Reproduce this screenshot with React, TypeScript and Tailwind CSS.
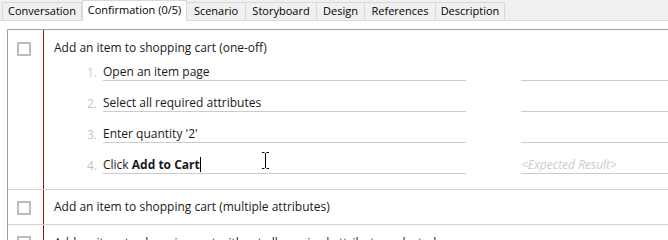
const tabs = [
  { label: 'Conversation', w: 'w-[80px]' },
  { label: 'Confirmation (0/5)', w: 'w-[105px]', active: true },
  { label: 'Scenario', w: 'w-[59px]' },
  { label: 'Storyboard', w: 'w-[71px]' },
  { label: 'Design', w: 'w-[48px]' },
  { label: 'References', w: 'w-[71px]' },
  { label: 'Description', w: 'w-[69px]' },
]

function Checkbox() {
  return <div className="w-[14px] h-[14px] border-2 border-[#bcbcbc] bg-white" />
}

function Step({ n, children, expected }: { n: number; children: React.ReactNode; expected?: boolean }) {
  return (
    <div className="flex h-[31px] leading-[15px]">
      <div className="w-[59px] pr-[6px] flex items-end justify-end pb-px text-[#c4c4c4]">{n}.</div>
      <div className="w-[363px] border-b border-[#cccccc] flex items-end pb-px">{children}</div>
      <div className="ml-[55px] flex-1 border-b border-[#cccccc] flex items-end pb-px italic text-[#cccccc]">
        {expected ? '<Expected Result>' : ''}
      </div>
    </div>
  )
}

export default function App() {
  return (
    <div
      className="w-[668px] h-[240px] overflow-hidden bg-white relative text-[12px] text-[#1a1a1a]"
      style={{ fontFamily: '"Open Sans", "Noto Sans", sans-serif' }}
    >
      <div className="h-[21px] bg-[#f0f0f0] border-b border-[#d9d9d9] flex items-end pl-[2px] text-[11px]">
        {tabs.map((t) =>
          t.active ? (
            <div
              key={t.label}
              className={`${t.w} h-[21px] -mb-px bg-white border border-b-0 border-[#d9d9d9] flex items-center justify-center pb-[2px] text-black`}
            >
              {t.label}
            </div>
          ) : (
            <div
              key={t.label}
              className={`${t.w} h-[18px] bg-[#f0f0f0] border border-b-0 border-l-0 first:border-l border-[#d9d9d9] flex items-center justify-center text-black`}
            >
              {t.label}
            </div>
          )
        )}
      </div>

      <div className="mt-[8px] ml-[7px] border-l border-t border-[#a0a0a0]">
        <div className="flex border-b border-[#d4d4d4]">
          <div className="w-[36px] shrink-0 border-r border-[#a01010] pl-[9px] pt-[12px]">
            <Checkbox />
          </div>
          <div className="flex-1 pb-[15px]">
            <div className="pl-[10px] pt-[8px] h-[20px] leading-[20px]">Add an item to shopping cart (one-off)</div>
            <Step n={1}>Open an item page</Step>
            <Step n={2}>Select all required attributes</Step>
            <Step n={3}>Enter quantity '2'</Step>
            <Step n={4} expected>
              <span>
                Click <b>Add to Cart</b>
              </span>
              <span className="inline-block w-px h-[15px] bg-black" />
            </Step>
          </div>
        </div>
        <div className="flex border-b border-[#d4d4d4] h-[35px]">
          <div className="w-[36px] shrink-0 border-r border-[#a01010] pl-[9px] pt-[11px]">
            <Checkbox />
          </div>
          <div className="flex-1 pl-[10px] flex items-center">Add an item to shopping cart (multiple attributes)</div>
        </div>
        <div className="flex h-[35px]">
          <div className="w-[36px] shrink-0 border-r border-[#a01010] pl-[9px] pt-[11px]">
            <Checkbox />
          </div>
          <div className="flex-1 pl-[10px] flex items-center">
            Add an item to shopping cart without all required attributes selected
          </div>
        </div>
      </div>

      <svg className="absolute left-[261px] top-[152px]" width="9" height="17" viewBox="0 0 9 17">
        <path d="M1 0.5h2.5M5.5 0.5H8M4.5 1v15M1 16.5h2.5M5.5 16.5H8" stroke="#000" strokeWidth="1" fill="none" />
      </svg>
    </div>
  )
}
